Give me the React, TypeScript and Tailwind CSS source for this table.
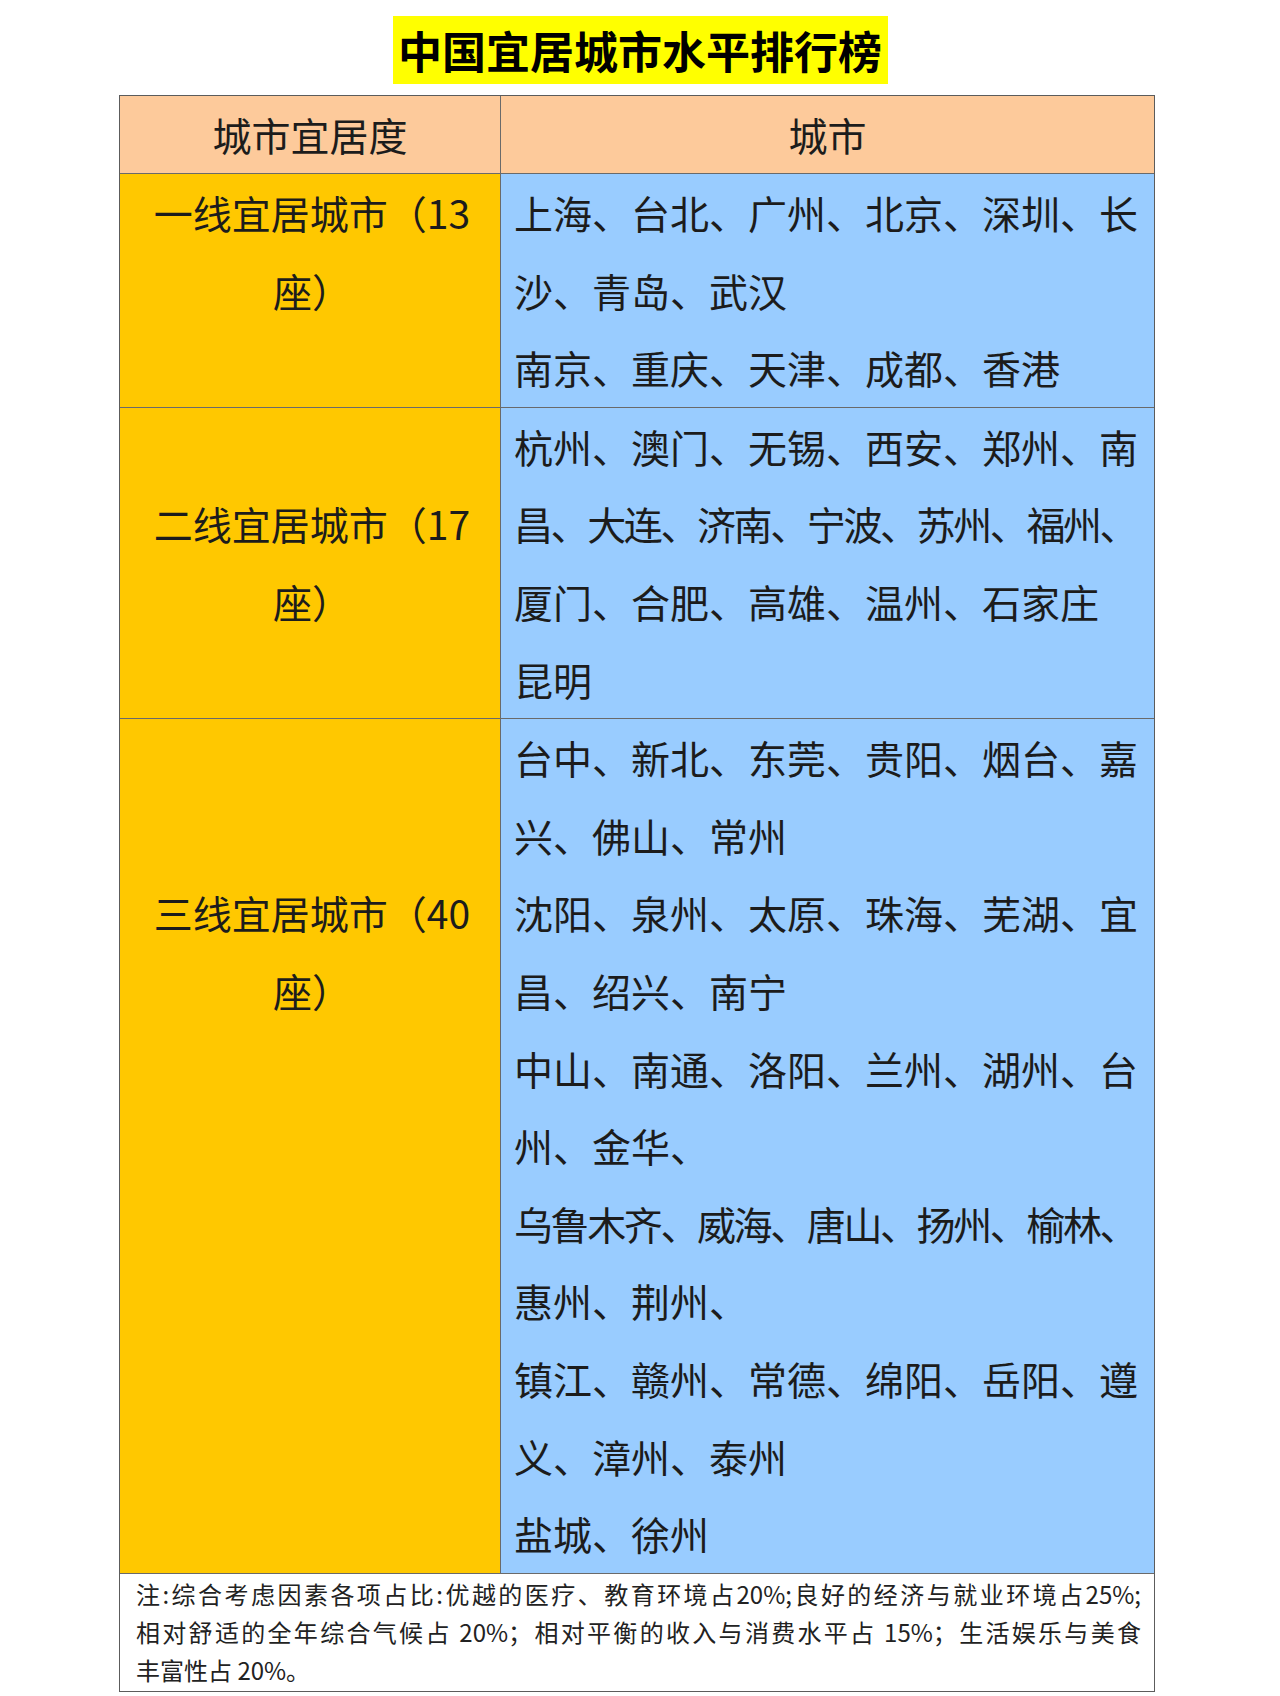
/**
 * LivableCitiesTable — 中国宜居城市水平排行榜 ranking sheet.
 *
 * Lines are laid out explicitly so the wraps match the source sheet.
 */

type Row = {
  label: string[];
  // number of empty lines above the label in the left column
  offset: number;
  lines: { text: string; tight?: boolean }[];
};

const ROWS: Row[] = [
  {
    label: ['一线宜居城市（13', '座）'],
    offset: 0,
    lines: [
      { text: '上海、台北、广州、北京、深圳、长' },
      { text: '沙、青岛、武汉' },
      { text: '南京、重庆、天津、成都、香港' },
    ],
  },
  {
    label: ['二线宜居城市（17', '座）'],
    offset: 1,
    lines: [
      { text: '杭州、澳门、无锡、西安、郑州、南' },
      { text: '昌、大连、济南、宁波、苏州、福州、', tight: true },
      { text: '厦门、合肥、高雄、温州、石家庄' },
      { text: '昆明' },
    ],
  },
  {
    label: ['三线宜居城市（40', '座）'],
    offset: 2,
    lines: [
      { text: '台中、新北、东莞、贵阳、烟台、嘉' },
      { text: '兴、佛山、常州' },
      { text: '沈阳、泉州、太原、珠海、芜湖、宜' },
      { text: '昌、绍兴、南宁' },
      { text: '中山、南通、洛阳、兰州、湖州、台' },
      { text: '州、金华、' },
      { text: '乌鲁木齐、威海、唐山、扬州、榆林、', tight: true },
      { text: '惠州、荆州、' },
      { text: '镇江、赣州、常德、绵阳、岳阳、遵' },
      { text: '义、漳州、泰州' },
      { text: '盐城、徐州' },
    ],
  },
];

const NOTE_LINES = [
  '注:综合考虑因素各项占比:优越的医疗、教育环境占20%;良好的经济与就业环境占25%;',
  '相对舒适的全年综合气候占 20%；相对平衡的收入与消费水平占 15%；生活娱乐与美食',
  '丰富性占 20%。',
];

export default function App() {
  return (
    <div className="w-[1280px] h-[1696px] bg-white text-[#1c1c1c] font-['Noto_Sans_CJK_SC','Noto_Sans_CJK_JP',sans-serif]">
      {/* Title */}
      <div className="flex justify-center pt-[16px] pb-[11px]">
        <div className="w-[495px] h-[68px] bg-[#ffff00] flex items-center justify-center">
          <div className="whitespace-nowrap text-[44px] leading-[68px] font-bold text-black">
            中国宜居城市水平排行榜
          </div>
        </div>
      </div>

      {/* Table */}
      <div className="ml-[119px] w-[1036px] border border-[#5c5c5c] text-[39px] font-normal">
        {/* Header */}
        <div className="flex bg-[#fdca9b] border-b border-[#6a6a6a]">
          <div className="w-[381px] shrink-0 border-r border-[#6a6a6a] text-center leading-[77px]">
            城市宜居度
          </div>
          <div className="flex-1 text-center leading-[77px]">城市</div>
        </div>

        {ROWS.map((row, i) => (
          <div key={i} className="flex border-b border-[#6a6a6a]">
            <div className="w-[381px] shrink-0 bg-[#ffc800] border-r border-[#6a6a6a] pl-[4px] text-center leading-[77.6px]">
              {Array.from({ length: row.offset }).map((_, k) => (
                <div key={k}>&nbsp;</div>
              ))}
              {row.label.map((l) => (
                <div key={l} className="whitespace-nowrap">
                  {l}
                </div>
              ))}
            </div>
            <div className="flex-1 bg-[#99ccff] pl-[13px] leading-[77.6px]">
              {row.lines.map((line) => (
                <div
                  key={line.text}
                  className={
                    line.tight
                      ? 'whitespace-nowrap tracking-[-2.4px]'
                      : 'whitespace-nowrap'
                  }
                >
                  {line.text}
                </div>
              ))}
            </div>
          </div>
        ))}

        {/* Note */}
        <div className="bg-white pl-[16px] pr-[13px] pt-[1px] pb-[2px] text-[24px] leading-[38px] font-normal text-[#222]">
          {NOTE_LINES.map((line, k) => (
            <div
              key={k}
              className={
                k < 2
                  ? 'whitespace-nowrap text-justify [text-align-last:justify]'
                  : 'whitespace-nowrap'
              }
            >
              {line}
            </div>
          ))}
        </div>
      </div>
    </div>
  );
}
